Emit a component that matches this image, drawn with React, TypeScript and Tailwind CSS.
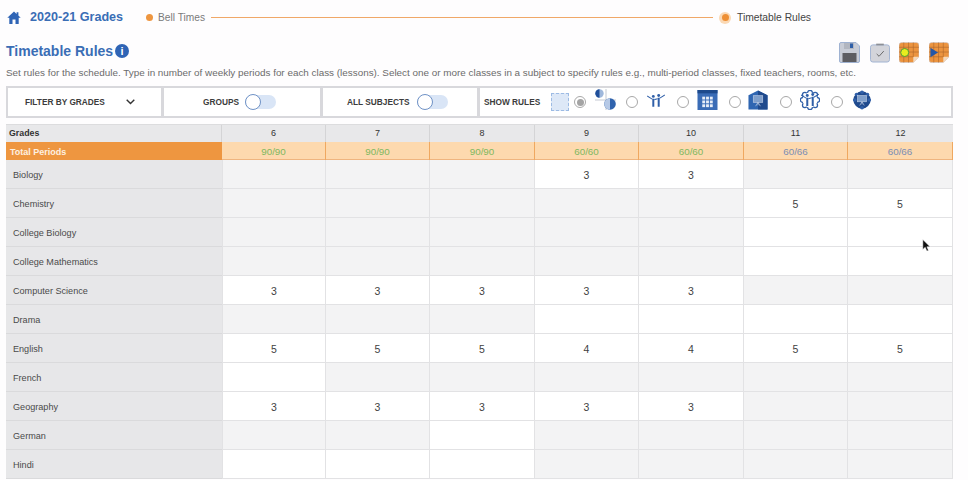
import React from "react";

const font = { fontFamily: '"Liberation Sans", Arial, sans-serif' };

type Cell = string | null | "";
// null = locked (gray), "" = open (white), other = white with number
const rows: [string, Cell[]][] = [
  ["Biology", [null, null, null, "3", "3", null, null]],
  ["Chemistry", [null, null, null, null, null, "5", "5"]],
  ["College Biology", [null, null, null, null, null, "", ""]],
  ["College Mathematics", [null, null, null, null, null, "", ""]],
  ["Computer Science", ["3", "3", "3", "3", "3", null, null]],
  ["Drama", [null, null, null, "", "", "", ""]],
  ["English", ["5", "5", "5", "4", "4", "5", "5"]],
  ["French", ["", null, null, null, null, null, null]],
  ["Geography", ["3", "3", "3", "3", "3", null, null]],
  ["German", [null, null, "", null, null, null, null]],
  ["Hindi", ["", "", "", null, null, null, null]],
];

const grades = ["6", "7", "8", "9", "10", "11", "12"];
const totals = ["90/90", "90/90", "90/90", "60/60", "60/60", "60/66", "60/66"];

const gridCols = "grid grid-cols-[216px_104px_104px_105px_104px_105px_104px_105px]";

function Toggle() {
  return (
    <span className="relative inline-block w-[31px] h-[14px] rounded-full bg-[#d9e5f6]">
      <span className="absolute left-0 top-[-1px] w-[16px] h-[16px] rounded-full bg-white border-[1.5px] border-[#6f92c6]" />
    </span>
  );
}

function Radio({ on }: { on?: boolean }) {
  return (
    <span className="w-[12px] h-[12px] rounded-full border border-[#a8a8a8] bg-white flex items-center justify-center shrink-0">
      {on && <span className="w-[7px] h-[7px] rounded-full bg-[#a4a4a4]" />}
    </span>
  );
}

function OrangeGrid({ children }: { children: React.ReactNode }) {
  return (
    <svg width="20" height="21" viewBox="0 0 21 21">
      <path d="M3 0h15a3 3 0 0 1 3 3v12l-6 6H3a3 3 0 0 1-3-3V3a3 3 0 0 1 3-3z" fill="#ec943f" stroke="#c9c9d2" strokeWidth="0.6" />
      <path d="M0 5h21M0 10h21M0 15h15M5 0v21M10 0v21M15 0v15" stroke="#a9652a" strokeWidth="0.6" />
      <path d="M15 21v-5a1 1 0 0 1 1-1h5z" fill="#f4d9bd" />
      {children}
    </svg>
  );
}

function House() {
  return (
    <svg width="20" height="20" viewBox="0 0 21 21">
      <path d="M10.5 0.5L20.5 5.5v15H0.5V5.5z" fill="#2f66b2" />
      <path d="M10.5 0.5L20.5 5.5v15h-10z" fill="#1f4a8d" />
      <rect x="5.5" y="6" width="10" height="7" fill="#7f9fcb" stroke="#c9d6ea" strokeWidth="0.6" />
      <path d="M10.5 13v3M8 17l2.5-4 2.5 4" stroke="#c9d6ea" strokeWidth="0.7" fill="none" />
    </svg>
  );
}

function People() {
  return (
    <g fill="#2f5fa8">
      <circle cx="8" cy="6" r="1.6" />
      <circle cx="14" cy="5" r="1.6" />
      <path d="M6.9 8.5h2.2v9H6.9zM12.9 7.5h2.2v10h-2.2z" />
      <path d="M1.5 5l5.5 3.5v1.2L1 6zM20.5 4l-5.5 3.5v1.2L21 5z" />
      <path d="M9.1 9l3.8-1v1.2l-3.8 1z" />
    </g>
  );
}

function Flower() {
  const lumps: [number, number][] = [[11, 3], [11, 19], [3, 11], [19, 11], [5.3, 5.3], [16.7, 5.3], [5.3, 16.7], [16.7, 16.7]];
  return (
    <svg width="20" height="20" viewBox="0 0 22 22">
      {lumps.map(([x, y], i) => (
        <circle key={i} cx={x} cy={y} r="2.6" fill="white" stroke="#2f5fa8" strokeWidth="1.4" />
      ))}
      <circle cx="11" cy="11" r="8.2" fill="white" />
      <People />
    </svg>
  );
}

function ShowRuleIcons() {
  return (
    <>
      <span className="w-[18px] h-[18px] bg-[#dde8f7] border border-dashed border-[#9dbbe4] shrink-0" />
      <span className="ml-[5px]"><Radio on /></span>
      <svg className="ml-[9px] mt-[-5px]" width="21" height="21" viewBox="0 0 21 21">
        <path d="M11 0v21M0 11h21" stroke="#c5cad3" strokeWidth="1" />
        <circle cx="4.5" cy="4.5" r="4.2" fill="#9fb8dc" />
        <path d="M4.5 0.3a4.2 4.2 0 0 0 0 8.4z" fill="#1f4f9a" />
        <circle cx="15" cy="15" r="5.8" fill="#2f63ad" />
        <path d="M15 9.2a5.8 5.8 0 0 0 0 11.6z" fill="#b6c9e6" />
      </svg>
      <span className="ml-[10px]"><Radio /></span>
      <svg className="ml-[8px] mt-[-4px]" width="20" height="18" viewBox="0 0 22 20"><People /></svg>
      <span className="ml-[11px]"><Radio /></span>
      <svg className="ml-[8px] mt-[-4px]" width="21" height="20" viewBox="0 0 21 21">
        <rect width="21" height="21" fill="#3a6cb6" />
        <rect width="21" height="3.5" fill="#1e4a8c" />
        <g fill="#e8eef8">
          <rect x="5" y="7" width="3" height="3" /><rect x="9" y="7" width="3" height="3" /><rect x="13" y="7" width="3" height="3" />
          <rect x="5" y="11" width="3" height="3" /><rect x="9" y="11" width="3" height="3" /><rect x="13" y="11" width="3" height="3" />
          <rect x="5" y="15" width="3" height="3" /><rect x="9" y="15" width="3" height="3" /><rect x="13" y="15" width="3" height="3" />
        </g>
      </svg>
      <span className="ml-[11px]"><Radio /></span>
      <span className="ml-[7px] flex mt-[-4px]"><House /></span>
      <span className="ml-[12px]"><Radio /></span>
      <span className="ml-[8px] flex mt-[-4px]"><Flower /></span>
      <span className="ml-[11px]"><Radio /></span>
      <span className="ml-[9px] flex mt-[-4px]">
        <svg width="20" height="20" viewBox="0 0 22 22">
          <circle cx="11" cy="11" r="9.5" fill="#1f4a8d" />
          <g fill="#2f5fa8"><circle cx="11" cy="2.5" r="2" /><circle cx="11" cy="19.5" r="2" /><circle cx="5" cy="5" r="2" /><circle cx="17" cy="5" r="2" /><circle cx="3" cy="11" r="2" /><circle cx="19" cy="11" r="2" /></g>
          <rect x="6" y="6" width="10" height="7" fill="#7f9fcb" stroke="#c9d6ea" strokeWidth="0.6" />
          <path d="M11 13v3M8.5 17l2.5-4 2.5 4" stroke="#c9d6ea" strokeWidth="0.7" fill="none" />
        </svg>
      </span>
    </>
  );
}

export default function App() {
  return (
    <div className="relative w-[968px] h-[480px] overflow-hidden bg-[#fefdfe]" style={font}>
      {/* stepper */}
      <div className="flex items-center h-[35px] pl-[7px]">
        <svg width="14" height="13" viewBox="0 0 14 13" className="mt-[-1px]">
          <path d="M7 0.5L0.3 6.7h2V13h3.2V8.6h3V13h3.2V6.7h2L11.4 4.5V1.2H9.6v1.7z" fill="#2f64b5" />
        </svg>
        <span className="ml-[9px] text-[12.6px] font-bold text-[#3a6db5] w-[116px]">2020-21 Grades</span>
        <span className="w-[7px] h-[7px] rounded-full bg-[#ee9640]" />
        <span className="ml-[5px] w-[46px] text-[10.2px] text-[#7a7a7a] whitespace-nowrap">Bell Times</span>
        <span className="ml-[7px] h-px w-[502px] bg-[#f0a868]" />
        <span className="ml-[6px] w-[12px] h-[12px] rounded-full bg-[#fbd9b5] flex items-center justify-center">
          <span className="w-[7px] h-[7px] rounded-full bg-[#ee8f35]" />
        </span>
        <span className="ml-[6px] text-[10.3px] text-[#444]">Timetable Rules</span>
      </div>

      {/* heading */}
      <div className="flex items-center justify-between h-[30px] pl-[6px] pr-[19px] mt-[1px]">
        <div className="flex items-center">
          <span className="text-[14px] font-bold text-[#3a6db5]">Timetable Rules</span>
          <span className="ml-[2px] w-[14px] h-[14px] rounded-full bg-[#2f64b5] text-white text-[11px] font-bold flex items-center justify-center">i</span>
        </div>
        <div className="flex items-center gap-[9.6px] mt-[2px]">
          <svg width="21" height="21" viewBox="0 0 21 21">
            <path d="M2 0.5h15l3.5 3.5v15a1.5 1.5 0 0 1-1.5 1.5H2A1.5 1.5 0 0 1 .5 19V2A1.5 1.5 0 0 1 2 .5z" fill="#c8ccd6" stroke="#9fb2d2" />
            <rect x="5" y="1" width="10" height="6" fill="#b2b6c0" />
            <rect x="11" y="1.5" width="3" height="4.5" fill="#2f5fa8" />
            <rect x="3.5" y="11" width="14" height="9" fill="#5d5d62" />
          </svg>
          <svg width="20" height="21" viewBox="0 0 21 21">
            <rect x="0.5" y="2.5" width="20" height="18" rx="2.5" fill="#d3d4da" stroke="#9fb2d2" />
            <path d="M6.5 3V1.2h8V3z" fill="#8d8f96" />
            <path d="M7 12l2.5 2.5L14.5 9" stroke="#666" strokeWidth="1" fill="none" />
          </svg>
          <OrangeGrid>
            <circle cx="6" cy="10.5" r="4.2" fill="#e8ee1e" stroke="#4a9a3a" strokeWidth="1" />
          </OrangeGrid>
          <OrangeGrid>
            <path d="M1.5 5.5l8 5-8 5z" fill="#2457a8" />
          </OrangeGrid>
        </div>
      </div>

      <p className="pl-[6px] text-[9.9px] leading-[14px] text-[#6b6b6b] whitespace-nowrap">
        Set rules for the schedule. Type in number of weekly periods for each class (lessons). Select one or more classes in a subject to specify rules e.g., multi-period classes, fixed teachers, rooms, etc.
      </p>

      {/* filters */}
      <div className="flex items-stretch mt-[6px] ml-[6px] w-[947px] h-[32px] border-2 border-[#d8d8dc] bg-white text-[8.3px] font-bold text-[#3c3c3c]">
        <div className="w-[156px] flex items-center justify-between pl-[17px] pr-[26px] border-r-[3px] border-[#d8d8dc]">
          <span className="mt-[1px]">FILTER BY GRADES</span>
          <svg width="9" height="6" viewBox="0 0 9 6"><path d="M0.7 0.8L4.5 4.6 8.3 0.8" stroke="#333" strokeWidth="1.4" fill="none" /></svg>
        </div>
        <div className="w-[159px] flex items-center pl-[39px] border-r-[3px] border-[#d8d8dc]">
          <span className="w-[42px] mt-[1px]">GROUPS</span>
          <span className="flex"><Toggle /></span>
        </div>
        <div className="w-[157px] flex items-center pl-[24px] border-r-[3px] border-[#d8d8dc]">
          <span className="w-[70px] mt-[1px]">ALL SUBJECTS</span>
          <span className="flex"><Toggle /></span>
        </div>
        <div className="flex-1 flex items-center pl-[4px]">
          <span className="w-[67px] mt-[1px]">SHOW RULES</span>
          <ShowRuleIcons />
        </div>
      </div>

      {/* table */}
      <div className="mt-[6px] ml-[6px] w-[947px] text-[#3f3f3f]">
        <div className={`${gridCols} h-[18px] bg-[#e8e8ea] border-t border-[#dcdcde]`}>
          <div className="pl-[3px] pt-[1px] flex items-center text-[8.8px] font-bold text-[#333] border-r border-[#d4d4d6]">Grades</div>
          {grades.map((g, i) => (
            <div key={g} className={`pt-[1px] flex items-center justify-center text-[9px] text-[#333] ${i < 6 ? "border-r border-[#d4d4d6]" : ""}`}>{g}</div>
          ))}
        </div>
        <div className={`${gridCols} h-[18px] bg-[#fdd9ae] border-b border-[#efb57f]`}>
          <div className="pl-[4px] pt-[3px] flex items-center text-[9px] font-bold text-[#fdf0e0] bg-[#ee9640]">Total Periods</div>
          {totals.map((t, i) => (
            <div
              key={i}
              className={`pt-[3px] flex items-center justify-center text-[9.8px] border-r border-[#efa860] ${i > 4 ? "text-[#7a8db5]" : "text-[#7db860]"}`}
            >
              {t}
            </div>
          ))}
        </div>
        {rows.map(([name, cells]) => (
          <div key={name} className={`${gridCols} h-[29px]`}>
            <div className="pl-[7px] pt-[3px] flex items-center text-[9.1px] text-[#4a4a4a] bg-[#e7e7e9] border-b border-[#dadadc]">{name}</div>
            {cells.map((c, i) => (
              <div
                key={i}
                className={`pt-[3px] flex items-center justify-center text-[10.5px] border-b border-r border-[#e2e2e4] ${c === null ? "bg-[#f3f3f4]" : "bg-white"} ${i === 0 ? "border-l" : ""}`}
              >
                {c}
              </div>
            ))}
          </div>
        ))}
      </div>

      {/* mouse cursor */}
      <svg className="absolute left-[922px] top-[239px]" width="9" height="13" viewBox="0 0 9 13">
        <path d="M0.8 0.5v10l2.4-2.2 1.6 3.8 1.7-.7-1.6-3.6h3.2z" fill="#111" stroke="#fff" strokeWidth="0.5" />
      </svg>
    </div>
  );
}
